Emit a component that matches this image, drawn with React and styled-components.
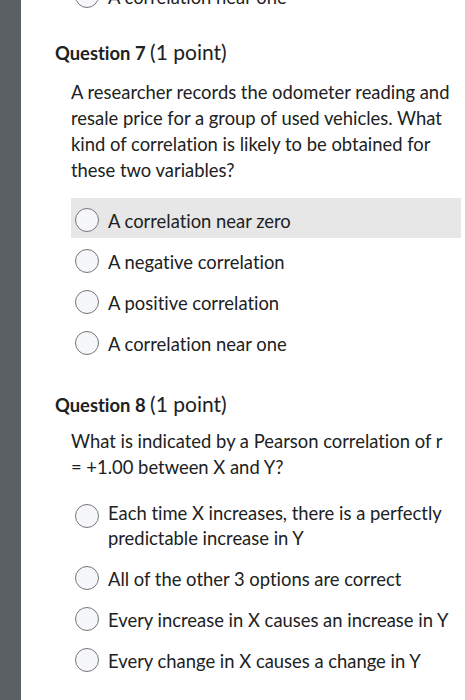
import styled, { createGlobalStyle } from 'styled-components';

const GlobalStyle = createGlobalStyle`
  html, body {
    margin: 0;
    padding: 0;
    background: #ffffff;
  }
  body {
    font-family: Lato, "Open Sans", sans-serif;
    font-variant-ligatures: no-common-ligatures;
    color: #202122;
  }
`;

const Page = styled.div`
  display: flex;
  height: 700px;
  overflow: hidden;
`;

const Sidebar = styled.div`
  width: 21px;
  flex-shrink: 0;
  background: #5b6064;
`;

const Main = styled.div`
  flex: 1;
  margin-top: -26px;
`;

const Question = styled.section`
  padding: 0 4px 0 34px;
  margin-bottom: ${({ gap }) => gap || 0}px;
`;

const Title = styled.h2`
  margin: 0 0 ${({ below }) => below}px;
  font-size: 18.4px;
  font-weight: 700;
  line-height: 24px;

  span {
    font-weight: 400;
    font-size: 21px;
  }
`;

const Prompt = styled.p`
  margin: 0 7px 0 16px;
  font-size: 18.4px;
  line-height: 26px;
`;

const Options = styled.div`
  display: flex;
  flex-direction: column;
  gap: 1px;
  margin: ${({ top }) => top || 0}px 0 0 16px;
`;

const Option = styled.label`
  display: flex;
  align-items: flex-start;
  gap: 9px;
  padding: 11px 4px 4px;
  background: ${({ hover }) => (hover ? '#e7e7e7' : 'transparent')};
  font-size: 18.4px;
  line-height: 25px;
`;

const Radio = styled.span`
  box-sizing: border-box;
  width: 24px;
  height: 24px;
  margin-top: ${({ multi }) => (multi ? '3px' : '-1px')};
  flex-shrink: 0;
  border: 1.5px solid #767676;
  border-radius: 50%;
  background: #f6f7fa;
`;

const q7 = [
  'A correlation near zero',
  'A negative correlation',
  'A positive correlation',
  'A correlation near one',
];

const q8 = [
  'Each time X increases, there is a perfectly predictable increase in Y',
  'All of the other 3 options are correct',
  'Every increase in X causes an increase in Y',
  'Every change in X causes a change in Y',
];

export default function App() {
  return (
    <>
      <GlobalStyle />
      <Page>
        <Sidebar />
        <Main>
          <Question gap={26}>
            <Options>
              <Option>
                <Radio />
                A correlation near one
              </Option>
            </Options>
          </Question>
          <Question gap={31}>
            <Title below={14}>
              Question 7 <span>(1 point)</span>
            </Title>
            <Prompt>
              A researcher records the odometer reading and resale price for a group of used
              vehicles. What kind of correlation is likely to be obtained for these two variables?
            </Prompt>
            <Options top={15}>
              {q7.map((text, i) => (
                <Option key={i} hover={i === 0}>
                  <Radio />
                  {text}
                </Option>
              ))}
            </Options>
          </Question>
          <Question>
            <Title below={11}>
              Question 8 <span>(1 point)</span>
            </Title>
            <Prompt>What is indicated by a Pearson correlation of r = +1.00 between X and Y?</Prompt>
            <Options top={10}>
              {q8.map((text, i) => (
                <Option key={i}>
                  <Radio multi={i === 0} />
                  <span>{text}</span>
                </Option>
              ))}
            </Options>
          </Question>
        </Main>
      </Page>
    </>
  );
}
